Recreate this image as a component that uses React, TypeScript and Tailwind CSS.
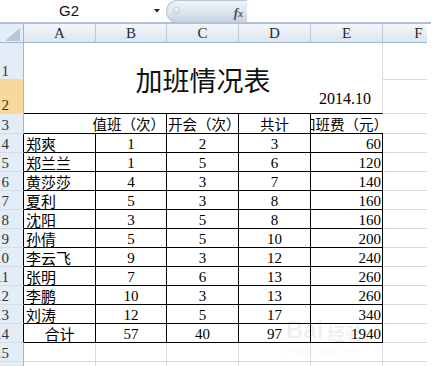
import React from 'react';

const data: string[][] = [
  ['郑爽', '1', '2', '3', '60'],
  ['郑兰兰', '1', '5', '6', '120'],
  ['黄莎莎', '4', '3', '7', '140'],
  ['夏利', '5', '3', '8', '160'],
  ['沈阳', '3', '5', '8', '160'],
  ['孙倩', '5', '5', '10', '200'],
  ['李云飞', '9', '3', '12', '240'],
  ['张明', '7', '6', '13', '260'],
  ['李鹏', '10', '3', '13', '260'],
  ['刘涛', '12', '5', '17', '340'],
  ['合计', '57', '40', '97', '1940'],
];

function RowHead({ n, active, edge, h }: { n: number; active?: boolean; edge?: boolean; h?: string }) {
  return (
    <div
      className={`w-[24px] shrink-0 ${h ?? 'h-full'} flex items-end justify-end pr-[14px] overflow-hidden whitespace-nowrap border-r border-b border-b-[#d3ddea] text-[15px] leading-[15px] text-[#333] ${
        edge ? 'border-r-black' : 'border-r-[#9eb6ce]'
      } ${active ? 'bg-[#f9d89b]' : 'bg-[#e4ecf7]'}`}
    >
      {n}
    </div>
  );
}

function FCell({ h }: { h?: string }) {
  return <div className={`w-[72px] shrink-0 ${h ?? 'h-full'} border-b border-[#d7dbe0]`} />;
}

const cell = 'h-full shrink-0 flex items-end border-r border-b border-black leading-[15px] whitespace-nowrap';

function DataRow({ n, r, total }: { n: number; r: string[]; total?: boolean }) {
  return (
    <div className="flex h-[19px]">
      <RowHead n={n} edge />
      <div className={`w-[72px] ${cell} ${total ? 'justify-center' : 'justify-start pl-[2px]'}`}>
        <span className="relative top-[1px]">{r[0]}</span>
      </div>
      <div className={`w-[71px] ${cell} justify-center`}>{r[1]}</div>
      <div className={`w-[72px] ${cell} justify-center`}>{r[2]}</div>
      <div className={`w-[72px] ${cell} justify-center`}>{r[3]}</div>
      <div className={`w-[72px] ${cell} justify-end pr-[1px]`}>{r[4]}</div>
      <FCell />
    </div>
  );
}

function EmptyRow({ n }: { n: number }) {
  return (
    <div className="flex h-[19px]">
      <RowHead n={n} />
      <div className="w-[72px] h-full shrink-0 border-r border-b border-[#d7dbe0]" />
      <div className="w-[71px] h-full shrink-0 border-r border-b border-[#d7dbe0]" />
      <div className="w-[72px] h-full shrink-0 border-r border-b border-[#d7dbe0]" />
      <div className="w-[72px] h-full shrink-0 border-r border-b border-[#d7dbe0]" />
      <div className="w-[72px] h-full shrink-0 border-r border-b border-[#d7dbe0]" />
      <FCell />
    </div>
  );
}

const cols: [string, string][] = [
  ['A', 'w-[72px]'],
  ['B', 'w-[71px]'],
  ['C', 'w-[72px]'],
  ['D', 'w-[72px]'],
  ['E', 'w-[72px]'],
  ['F', 'w-[72px]'],
];

export default function App() {
  return (
    <div className="relative w-[436px] h-[366px] overflow-hidden bg-white text-black [font-family:'Liberation_Serif','Noto_Sans_CJK_SC',serif] text-[15px]">
      {/* name box + formula bar */}
      <div className="flex h-[22px] items-stretch">
        <div className="w-[138px] flex items-center justify-center [font-family:'Liberation_Sans',Arial,sans-serif] text-[15px] text-[#111]">
          G2
        </div>
        <div className="w-[28px] flex items-center justify-end pr-[6px]">
          <svg width="6" height="4" viewBox="0 0 6 4">
            <polygon points="0,0 6,0 3,3.5" fill="#222" />
          </svg>
        </div>
        <div className="relative w-[81px] h-[23px] rounded-l-full bg-linear-to-b from-[#f1f4f9] via-[#dde5ef] to-[#c6d3e3] border border-r-0 border-[#b9c6d6]">
          <div className="absolute left-[6px] top-[6px] w-[7px] h-[7px] rounded-full bg-linear-to-b from-[#ffffff] to-[#c9d3df] border border-[#c0cad6]" />
          <div className="absolute right-[4px] top-[2px] italic font-bold text-[13px] text-[#4a4f57] [font-family:'Liberation_Serif',serif]">
            f<span className="text-[10px]">x</span>
          </div>
        </div>
        <div className="flex-1" />
      </div>
      <div className="h-[2px] w-[431px] bg-[#aebfd3]" />

      <div className="w-[427px] overflow-hidden">
        {/* column headers */}
        <div className="flex h-[19px]">
          <div className="w-[24px] h-full shrink-0 bg-[#e4ecf7] border-r border-b border-[#9eb6ce] flex">
            <svg width="23" height="18" viewBox="0 0 23 18">
              <polygon points="5,17 20,17 20,4" fill="#b7c6d9" />
            </svg>
          </div>
          {cols.map(([l, w]) => (
            <div
              key={l}
              className={`${w} h-full shrink-0 flex items-center justify-center bg-linear-to-b from-[#f4f7fb] to-[#dce5f0] border-r border-r-[#bccbdc] border-b border-b-[#9eb6ce] text-[15px] leading-none text-[#2a2a2a] pt-[1px]`}
            >
              {l}
            </div>
          ))}
        </div>

        {/* rows 1-2 (merged title) */}
        <div className="flex h-[71px]">
          <div className="w-[24px] shrink-0 flex flex-col">
            <RowHead n={1} h="h-[37px]" />
            <RowHead n={2} h="h-[34px]" active />
          </div>
          <div className="w-[359px] shrink-0 h-full flex flex-col items-center pt-[23px] border-r border-r-[#d7dbe0] border-b border-b-black">
            <div className="text-[27px] leading-[27px] h-[27px] [font-family:'Noto_Sans_CJK_SC',sans-serif] text-[#111]">
              加班情况表
            </div>
            <div className="self-stretch text-right pr-[11px] text-[16px] leading-none mt-[-2px]">2014.10</div>
          </div>
          <div className="w-[72px] shrink-0 flex flex-col">
            <FCell h="h-[37px]" />
            <FCell h="h-[34px]" />
          </div>
        </div>

        {/* row 3 headers */}
        <div className="flex h-[20px] text-[14.5px] [text-spacing-trim:space-all] [font-feature-settings:'chws'_0]">
          <RowHead n={3} />
          <div className="w-[72px] h-full shrink-0 border-b border-black" />
          <div className={`w-[71px] ${cell} justify-end pr-[1px]`}>值班（次）</div>
          <div className={`w-[72px] ${cell} justify-start pl-[1px] overflow-hidden`}>开会（次）</div>
          <div className={`w-[72px] ${cell} justify-center`}>共计</div>
          <div className="w-[72px] h-full shrink-0 flex items-end border-b border-black leading-[15px] whitespace-nowrap">
            <div className="w-[77px] shrink-0 overflow-hidden flex justify-end">
              <span className="shrink-0 pl-[14px]">加班费（元）</span>
            </div>
          </div>
          <FCell />
        </div>

        {data.map((r, i) => (
          <DataRow key={i} n={i + 4} r={r} total={i === data.length - 1} />
        ))}
        <EmptyRow n={15} />
        <EmptyRow n={16} />
      </div>

      {/* faint watermark */}
      <div className="absolute left-[286px] top-[318px] flex flex-col items-start pointer-events-none select-none">
        <div className="flex items-end gap-[4px] text-[24px] leading-none font-bold [font-family:'Liberation_Sans',sans-serif] text-black/[0.07]">
          Bai<span className="[font-family:'Noto_Sans_CJK_SC',sans-serif] text-[18px]">经验</span>
        </div>
        <div className="text-[9px] leading-none mt-[4px] [font-family:'Liberation_Sans',sans-serif] text-black/[0.07]">
          jingyan.baidu.com
        </div>
      </div>
    </div>
  );
}
